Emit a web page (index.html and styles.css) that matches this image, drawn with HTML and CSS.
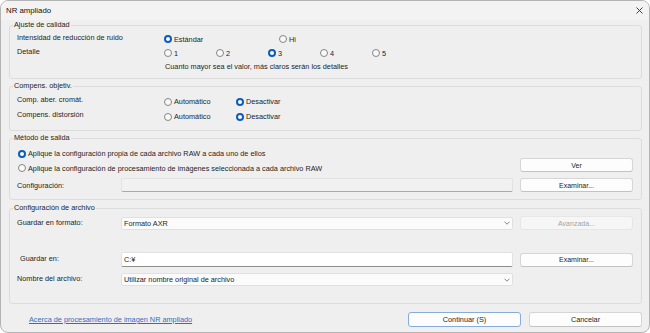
FILE: index.html
```html
<!DOCTYPE html>
<html lang="es">
<head>
<meta charset="utf-8">
<title>NR ampliado</title>
<link rel="stylesheet" href="styles.css">
</head>
<body>
<div class="window">
  <header class="titlebar">
    <span class="title">NR ampliado</span>
    <svg class="close" width="7" height="7" viewBox="0 0 7 7"><path d="M0.5 0.5L6.5 6.5M6.5 0.5L0.5 6.5" stroke="#2b2b2b" stroke-width="0.9" fill="none"/></svg>
  </header>
  <main class="content">
    <fieldset class="group g1">
      <legend>Ajuste de calidad</legend>
      <div class="row">
        <span class="label">Intensidad de reducción de ruido</span>
        <label class="opt w115"><input class="radio" type="radio" name="nr" checked><span>Estándar</span></label>
        <label class="opt"><input class="radio" type="radio" name="nr"><span>Hi</span></label>
      </div>
      <div class="row">
        <span class="label">Detalle</span>
        <label class="opt w52"><input class="radio" type="radio" name="det"><span>1</span></label>
        <label class="opt w52"><input class="radio" type="radio" name="det"><span>2</span></label>
        <label class="opt w52"><input class="radio" type="radio" name="det" checked><span>3</span></label>
        <label class="opt w52"><input class="radio" type="radio" name="det"><span>4</span></label>
        <label class="opt w52"><input class="radio" type="radio" name="det"><span>5</span></label>
      </div>
      <p class="note">Cuanto mayor sea el valor, más claros serán los detalles</p>
    </fieldset>

    <fieldset class="group g2">
      <legend>Compens. objetiv.</legend>
      <div class="row">
        <span class="label">Comp. aber. cromát.</span>
        <label class="opt w72"><input class="radio" type="radio" name="cab"><span>Automático</span></label>
        <label class="opt"><input class="radio" type="radio" name="cab" checked><span>Desactivar</span></label>
      </div>
      <div class="row">
        <span class="label">Compens. distorsión</span>
        <label class="opt w72"><input class="radio" type="radio" name="dis"><span>Automático</span></label>
        <label class="opt"><input class="radio" type="radio" name="dis" checked><span>Desactivar</span></label>
      </div>
    </fieldset>

    <fieldset class="group g3">
      <legend>Método de salida</legend>
      <div class="out">
        <div class="out-main">
          <label class="opt line1"><input class="radio" type="radio" name="out" checked><span>Aplique la configuración propia de cada archivo RAW a cada uno de ellos</span></label>
          <label class="opt line2"><input class="radio" type="radio" name="out"><span>Aplique la configuración de procesamiento de imágenes seleccionada a cada archivo RAW</span></label>
          <div class="cfg-row">
            <span>Configuración:</span>
            <div class="field field-disabled"></div>
          </div>
        </div>
        <div class="out-side">
          <button class="btn">Ver</button>
          <button class="btn">Examinar...</button>
        </div>
      </div>
    </fieldset>

    <fieldset class="group g4">
      <legend>Configuración de archivo</legend>
      <div class="frow r1">
        <span class="flabel">Guardar en formato:</span>
        <div class="select"><span>Formato AXR</span><svg width="6" height="4" viewBox="0 0 6 4"><polyline points="0.5,0.7 3,3.2 5.5,0.7" fill="none" stroke="#6a6a6a" stroke-width="0.8"/></svg></div>
        <button class="btn btn-disabled" disabled>Avanzada...</button>
      </div>
      <div class="frow r2">
        <span class="flabel indent">Guardar en:</span>
        <div class="field field-input">C:¥</div>
        <button class="btn">Examinar...</button>
      </div>
      <div class="frow r3">
        <span class="flabel">Nombre del archivo:</span>
        <div class="select"><span>Utilizar nombre original de archivo</span><svg width="6" height="4" viewBox="0 0 6 4"><polyline points="0.5,0.7 3,3.2 5.5,0.7" fill="none" stroke="#6a6a6a" stroke-width="0.8"/></svg></div>
      </div>
    </fieldset>
  </main>
  <footer class="footer">
    <a class="link" href="#">Acerca de procesamiento de imagen NR ampliado</a>
    <button class="btn btn-wide btn-focus">Continuar (S)</button>
    <button class="btn btn-wide">Cancelar</button>
  </footer>
</div>
</body>
</html>
```
FILE: styles.css
```css
* { box-sizing: border-box; }
html, body { margin: 0; padding: 0; }
body {
  width: 650px;
  height: 333px;
  overflow: hidden;
  background: #ffffff;
  font-family: "Liberation Sans", Arial, sans-serif;
  font-size: 7.3px;
  color: #1e1e1e;
}
.window {
  width: 650px;
  height: 333px;
  border: 1px solid #b4b4b4;
  border-radius: 8px;
  background: #efefef;
  overflow: hidden;
  display: flex;
  flex-direction: column;
}
.titlebar {
  height: 19px;
  flex: none;
  background: #f3f3f3;
  display: flex;
  align-items: center;
  justify-content: space-between;
  padding: 0 6px 0 5px;
}
.title { font-size: 7.8px; line-height: 19px; color: #111; }
.close { display: block; }

.content { display: flex; flex-direction: column; }
.group {
  margin: 0 7px 0 8px;
  padding: 0 8px 0 7px;
  border: 1px solid #dcdcdc;
  border-radius: 3px;
  min-width: 0;
}
.group legend {
  margin-left: -4px;
  padding: 0 1px;
  line-height: 10px;
  height: 10px;
  font-size: 7.3px;
}
.g1 { padding-top: 2px; padding-bottom: 4px; }
.g2 { margin-top: 2px; padding-top: 3px; padding-bottom: 6px; }
.g3 { margin-top: 2px; padding-top: 3px; padding-bottom: 7px; }
.g4 { margin-top: 3px; padding-top: 3px; padding-bottom: 17px; }

.row { display: flex; align-items: center; height: 14px; }
.g2 .row { height: 15px; }
.label { width: 147px; flex: none; margin-bottom: 3px; }
.g2 .label { margin-bottom: 5px; }
.opt { display: flex; align-items: center; flex: none; white-space: nowrap; }
.w115 { width: 115px; }
.w52 { width: 52px; }
.w72 { width: 72px; }
.radio {
  appearance: none;
  -webkit-appearance: none;
  margin: 0 2px 0 0;
  width: 8px;
  height: 8px;
  border: 1px solid #868686;
  border-radius: 50%;
  background: #f8f8f8;
  flex: none;
}
.radio:checked { border: 2.5px solid #0b5cc0; background: #ffffff; }
.note { margin: 0; height: 14px; line-height: 14px; padding-left: 148px; }

.out { display: flex; }
.out-main { flex: 1; margin-right: 7px; }
.out-side { width: 113px; flex: none; padding-top: 12px; display: flex; flex-direction: column; gap: 6px; }
.line1 { height: 15px; padding-left: 1px; }
.line2 { height: 14px; padding-left: 1px; }
.cfg-row {
  display: grid;
  grid-template-columns: 97px 1fr;
  column-gap: 7px;
  align-items: center;
  margin-top: 3px;
  height: 14px;
}

.field { height: 14px; border: 1px solid #e2e2e2; border-radius: 2px; }
.field-disabled { background: #f1f1f1; border-bottom-color: #a9a9a9; }
.field-input {
  height: 15px;
  background: #ffffff;
  border-bottom-color: #8d8d8d;
  padding-left: 2px;
  line-height: 13px;
}

.frow {
  display: grid;
  grid-template-columns: 97px 1fr 113px;
  column-gap: 7px;
  align-items: center;
}
.r1 { height: 14px; }
.r2 { margin-top: 22px; height: 15px; }
.r3 { margin-top: 6px; height: 13px; }
.flabel { margin-bottom: 2px; }
.indent { padding-left: 3px; }
.select {
  height: 13px;
  background: #fbfbfb;
  border: 1px solid #e0e0e0;
  border-radius: 2px;
  display: flex;
  align-items: center;
  justify-content: space-between;
  padding: 0 2px 0 2px;
}
.select svg { display: block; }

.btn {
  height: 14px;
  margin: 0;
  padding: 0;
  border: 1px solid #d6d6d6;
  border-bottom-color: #c2c2c2;
  border-radius: 3px;
  background: #fdfdfd;
  font-family: inherit;
  font-size: 7px;
  color: #1e1e1e;
}
.btn-disabled {
  background: #f6f6f6;
  border-color: #e6e6e6;
  color: #a3a3a3;
}

.footer {
  display: flex;
  align-items: center;
  gap: 8px;
  padding: 8px 7px 0 28px;
}
.link { flex: 1; color: #2d6fc2; text-decoration: underline; font-size: 7.3px; }
.btn-wide { width: 113px; height: 15px; flex: none; font-size: 7.3px; }
.btn-focus { border-color: #86acd8; }
```
